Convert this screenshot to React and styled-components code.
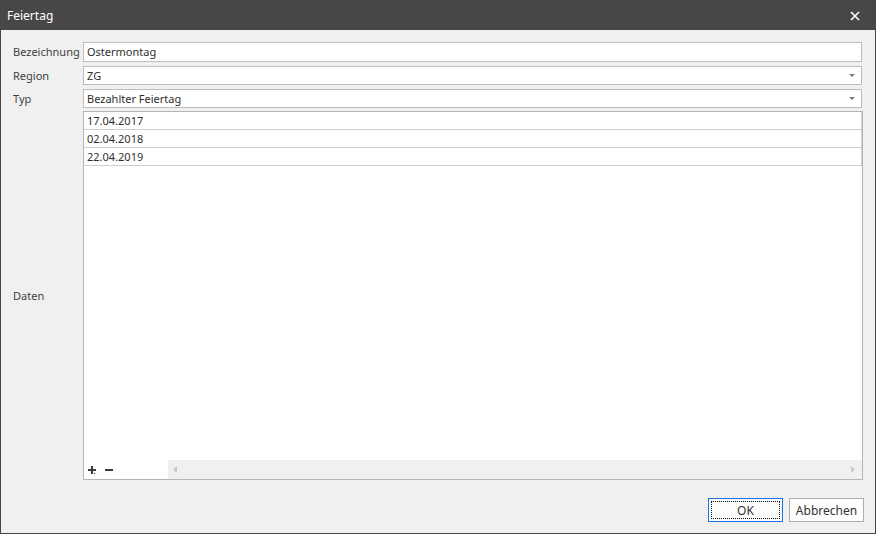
import styled, { createGlobalStyle } from "styled-components";

const GlobalStyle = createGlobalStyle`
  html, body { margin: 0; padding: 0; background: #f0f0f0; }
  body { font-family: "Noto Sans", "Liberation Sans", sans-serif; font-size: 11px; }
  * { box-sizing: border-box; }
`;

const dates = ["17.04.2017", "02.04.2018", "22.04.2019"];

export default function App() {
  return (
    <>
      <GlobalStyle />
      <Window>
        <TitleBar>
          <Title>Feiertag</Title>
          <CloseButton aria-label="close">
            <svg width="10" height="10" viewBox="0 0 10 10">
              <path d="M1 1 L9 9 M9 1 L1 9" stroke="#fff" strokeWidth="1.6" />
            </svg>
          </CloseButton>
        </TitleBar>
        <Body>
          <Form>
            <Label>Bezeichnung</Label>
            <TextField>Ostermontag</TextField>
            <Label>Region</Label>
            <Combo>
              ZG
              <Arrow />
            </Combo>
            <Label>Typ</Label>
            <Combo>
              Bezahlter Feiertag
              <Arrow />
            </Combo>
            <Label $center>Daten</Label>
            <List>
              <Rows>
                {dates.map((d) => (
                  <Row key={d}>{d}</Row>
                ))}
              </Rows>
              <ListFooter>
                <Tools>
                  <svg width="10" height="9" viewBox="0 0 10 9">
                    <path d="M3 0 h2 v3 h3 v2 h-3 v3 h-2 v-3 h-3 v-2 h3 z" fill="#3c3c3c" />
                    <rect x="6" y="7" width="1" height="1" fill="#3c3c3c" />
                  </svg>
                  <svg width="9" height="9" viewBox="0 0 9 9">
                    <rect x="0" y="3" width="8" height="2" fill="#3c3c3c" />
                  </svg>
                </Tools>
                <HScroll>
                  <svg width="4" height="7" viewBox="0 0 4 7">
                    <path d="M4 0 L0 3.5 L4 7 z" fill="#c8c8c8" />
                  </svg>
                  <svg width="4" height="7" viewBox="0 0 4 7">
                    <path d="M0 0 L4 3.5 L0 7 z" fill="#c8c8c8" />
                  </svg>
                </HScroll>
              </ListFooter>
            </List>
          </Form>
          <Buttons>
            <Button $focused>
              <span>OK</span>
            </Button>
            <Button>
              <span>Abbrechen</span>
            </Button>
          </Buttons>
        </Body>
      </Window>
    </>
  );
}

const Window = styled.div`
  width: 876px;
  height: 534px;
  display: flex;
  flex-direction: column;
  border: 1px solid #474747;
  border-top: none;
  background: #f0f0f0;
`;

const TitleBar = styled.div`
  height: 30px;
  margin: 0 -1px;
  background: #474747;
  display: flex;
  align-items: center;
  justify-content: space-between;
  padding: 0 16px 0 7px;
`;

const Title = styled.div`
  color: #fff;
  font-size: 12px;
`;

const CloseButton = styled.div`
  display: flex;
  align-items: center;
  padding-top: 1px;
`;

const Body = styled.div`
  flex: 1;
  display: flex;
  flex-direction: column;
  padding: 12px 12px 11px 12px;
`;

const Form = styled.div`
  flex: 1;
  display: grid;
  grid-template-columns: 70px 1fr;
  grid-template-rows: 20px 19px 19px 1fr;
  row-gap: 4px;
  min-height: 0;
`;

const Label = styled.div`
  color: #3f3f3f;
  display: flex;
  align-items: ${(p) => (p.$center ? "center" : "flex-start")};
  padding-top: ${(p) => (p.$center ? "0" : "1px")};
  line-height: 18px;
  white-space: nowrap;
`;

const TextField = styled.div`
  border: 1px solid #bdbdbd;
  background: #fff;
  color: #2f2f2f;
  padding: 0 3px;
  line-height: 18px;
  margin-right: 1px;
`;

const Combo = styled(TextField)`
  line-height: 17px;
  position: relative;
`;

const Arrow = styled.span`
  position: absolute;
  right: 6px;
  top: 7px;
  width: 0;
  height: 0;
  border-left: 3px solid transparent;
  border-right: 3px solid transparent;
  border-top: 3px solid #7a7a7a;
`;

const List = styled.div`
  border: 1px solid #b4b4b4;
  background: #fff;
  display: flex;
  flex-direction: column;
  margin-top: -1px;
`;

const Rows = styled.div`
  flex: 1;
`;

const Row = styled.div`
  height: 18px;
  line-height: 17px;
  border-bottom: 1px solid #cfcfcf;
  border-right: 1px solid #cfcfcf;
  padding-left: 3px;
  color: #2f2f2f;
`;

const ListFooter = styled.div`
  height: 19px;
  display: flex;
`;

const Tools = styled.div`
  width: 84px;
  display: flex;
  align-items: center;
  gap: 7px;
  padding-left: 4px;
  padding-top: 1px;
`;

const HScroll = styled.div`
  flex: 1;
  background: #f0f0f0;
  display: flex;
  align-items: center;
  justify-content: space-between;
  padding: 0 7px 0 5px;
`;

const Buttons = styled.div`
  display: flex;
  justify-content: flex-end;
  gap: 6px;
  margin-top: 18px;
  margin-right: -1px;
`;

const Button = styled.div`
  width: 75px;
  height: 24px;
  border: 1px solid ${(p) => (p.$focused ? "#1a73e8" : "#adadad")};
  background: #fdfdfd;
  padding: 2px;
  color: #333;
  font-size: 12px;
  span {
    display: flex;
    height: 100%;
    align-items: center;
    justify-content: center;
    border: 1px dotted ${(p) => (p.$focused ? "#111" : "transparent")};
  }
`;
